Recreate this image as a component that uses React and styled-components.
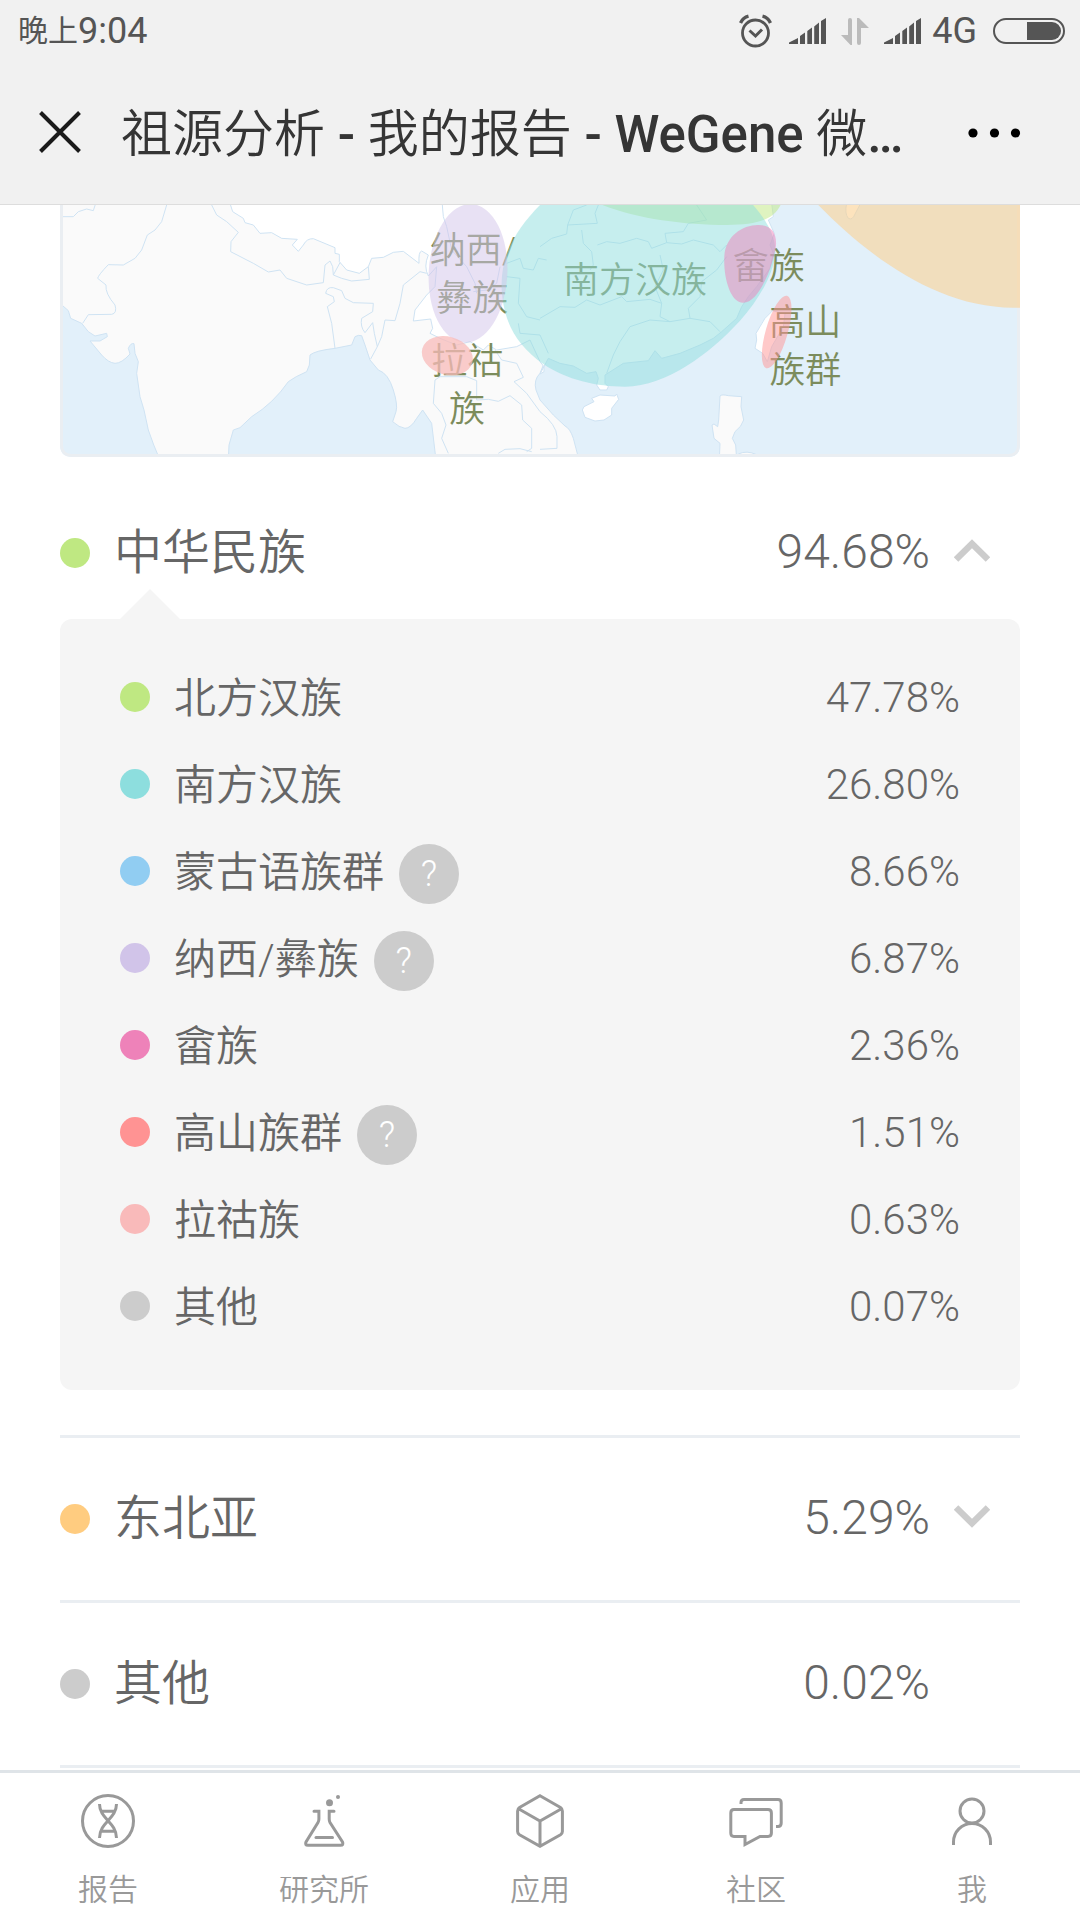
import React, { useState } from "react";
import styled, { createGlobalStyle } from "styled-components";

const GlobalStyle = createGlobalStyle`
  *, *::before, *::after { box-sizing: border-box; }
  body {
    margin: 0;
    background: #ffffff;
    color: #666666;
    font-family: Roboto, "Noto Sans CJK SC", sans-serif;
    font-weight: 300;
  }
  button { font: inherit; color: inherit; background: none; border: 0; padding: 0; cursor: pointer; }
  svg { display: block; }
`;

const Page = styled.div`
  display: flex;
  flex-direction: column;
  min-height: 100vh;
`;

const TopBar = styled.header`
  background: #f1f1f1;
  border-bottom: 1px solid #dddddd;
`;

const StatusBar = styled.div`
  display: flex;
  align-items: center;
  justify-content: space-between;
  height: 60px;
  padding: 2px 15px 0 18px;
  color: #555555;
  font-size: 36px;
  line-height: 56px;
  font-weight: 400;
`;

const Clock = styled.div`
  display: flex;
  align-items: center;
`;

const DayPart = styled.span`
  font-size: 30px;
`;

const StatusIcons = styled.div`
  display: flex;
  align-items: center;
  gap: 15px;
`;

const AlarmSvg = styled.svg`
  margin-right: 2px;
`;

const Network = styled.span`
  margin: 0 1px 0 -4px;
`;

const TitleBar = styled.div`
  display: flex;
  align-items: center;
  height: 144px;
  padding: 0 58px 0 39px;
`;

const IconButton = styled.button`
  flex: none;
`;

const Title = styled.h1`
  flex: 1;
  min-width: 0;
  margin: 0 24px 0 40px;
  padding-top: 6px;
  overflow: hidden;
  white-space: nowrap;
  color: #353535;
  font-size: 51px;
  line-height: 72px;
  font-weight: 350;
`;

const Latin = styled.span`
  font-weight: 500;
`;

const Content = styled.main`
  flex: 1;
  padding: 0 60px 2px;
`;

const MapSvg = styled.svg`
  width: 100%;
  height: auto;
`;

const MapLabel = styled.text`
  font-size: 108px;
  font-weight: 350;
  fill: #7c8c5c;
`;

const Group = styled.section`
  border-bottom: 3px solid #eaeef2;
  padding-top: ${(p) => (p.$open ? 30 : 0)}px;
  padding-bottom: ${(p) => (p.$open ? 45 : 0)}px;
`;

const Summary = styled.button`
  display: flex;
  align-items: center;
  width: 100%;
  height: ${(p) => (p.$open ? 132 : 162)}px;
  padding-right: 30px;
  padding-bottom: 4px;
  font-size: 48px;
  line-height: 72px;
  text-align: left;
`;

const Dot = styled.span`
  flex: none;
  width: 30px;
  height: 30px;
  border-radius: 50%;
  background: ${(p) => p.$color};
  margin-right: 24px;
`;

const SummaryDot = styled(Dot)`
  margin-top: 4px;
`;

const Name = styled.span`
  padding-top: 4px;
  font-weight: 350;
  white-space: nowrap;
`;

const Percent = styled.span`
  margin-left: auto;
  padding-top: 2px;
`;

const ChevronSlot = styled.span`
  width: 36px;
  margin-left: 24px;
`;

const Panel = styled.ul`
  position: relative;
  list-style: none;
  margin: 0;
  padding: 34px 60px 41px;
  border-radius: 12px;
  background: #f5f5f5;

  &::before {
    content: "";
    position: absolute;
    left: 60px;
    bottom: 100%;
    border: 30px solid transparent;
    border-top-width: 0;
    border-bottom-color: #f5f5f5;
  }
`;

const Item = styled.li`
  display: flex;
  align-items: center;
  height: 87px;
  font-size: 42px;
  line-height: 60px;
`;

const Help = styled.button`
  flex: none;
  width: 60px;
  height: 60px;
  margin: 6px 0 0 15px;
  border-radius: 50%;
  background: #cccccc;
  color: #ffffff;
  font-size: 36px;
  line-height: 60px;
`;

const TabBar = styled.nav`
  display: flex;
  height: 150px;
  border-top: 3px solid #dfe4e8;
  background: #ffffff;
`;

const Tab = styled.a`
  flex: 1;
  display: flex;
  flex-direction: column;
  align-items: center;
  gap: 24px;
  padding-top: 21px;
  color: #999999;
  font-size: 30px;
  line-height: 36px;
  font-weight: 350;
  text-decoration: none;
`;

const AlarmIcon = () => (
  <AlarmSvg width="33" height="34" viewBox="0 0 33 34" fill="none" stroke="#555" aria-hidden="true">
    <circle cx="16.5" cy="19" r="13" strokeWidth="2.8" />
    <path d="M10.5 16.5L16.5 22L23 15.5" strokeWidth="3" />
    <path d="M1.5 9Q4 3.5 9.5 2.2M31.500 9Q29 3.500 23.500 2.200" strokeWidth="3.4" />
  </AlarmSvg>
);

const SignalIcon = () => (
  <svg width="37" height="26" viewBox="0 0 37 26" fill="#555" aria-hidden="true">
    <path d="M0 26V24.500L9 20V26ZM11 26V18L16 14.500V26ZM18.300 26V13L23 9.500V26ZM25.200 26V8.500L30 4.500V26ZM32 26V3L37 0V26Z" />
  </svg>
);

const DataIcon = () => (
  <svg width="28" height="27" viewBox="0 0 28 27" fill="#bbb" aria-hidden="true">
    <path d="M7 2Q7 0 9 0T11 2V27H9.500L0 17H7ZM16 0H18L28 10H20V25Q20 27 18 27T16 25Z" />
  </svg>
);

const BatteryIcon = () => (
  <svg width="72" height="26" viewBox="0 0 72 26" aria-hidden="true">
    <rect x="1" y="1" width="70" height="24" rx="12" fill="none" stroke="#555" strokeWidth="2" />
    <path d="M34 4H59A9 9 0 0 1 59 22H34Z" fill="#555" />
  </svg>
);

const Chevron = ({ up }) => (
  <svg width="36" height="24" viewBox="0 0 36 24" fill="none" stroke="#ccc" strokeWidth="6.5" aria-hidden="true">
    <path d={up ? "M2 20.500L18 4.800L34 20.500" : "M2 2.500L18 18.200L34 2.500"} />
  </svg>
);

const tabIcons = {
  report: (
    <>
      <circle cx="27" cy="27" r="25.500" />
      <path d="M18.500 10C18.500 25 35.500 28 35.500 44M35.500 10C35.500 25 18.500 28 18.500 44M20 17.300H34M20 37.300H34" />
    </>
  ),
  lab: (
    <>
      <path d="M17 17.300H21.900V25Q21.900 27 21 28.500L9 48Q7.500 51.200 11 51.200H43.500Q47 51.200 45.500 48L33 28.500Q32.200 27 32.200 25V17.300H37" strokeLinecap="round" />
      <path d="M19 43.500H35.500" strokeLinecap="round" />
      <circle cx="32.500" cy="8.700" r="3.500" fill="#999" stroke="none" />
      <circle cx="41" cy="3" r="2" fill="#999" stroke="none" />
    </>
  ),
  apps: (
    <path d="M27 1.800L47.500 13.500Q49.400 14.700 49.400 17V37.500Q49.400 39.500 47.500 40.700L27 52.300L6.500 40.700Q4.600 39.500 4.600 37.500V17Q4.600 14.700 6.500 13.500ZM5.500 14.700L27 27L48.500 14.700M27 27V52" />
  ),
  community: (
    <>
      <path d="M5 15.500H39Q42.400 15.500 42.400 19V39Q42.400 42.400 39 42.400H31L16 50.500V42.400H5Q1.800 42.400 1.800 39V19Q1.800 15.500 5 15.500Z" />
      <path d="M12 10V8.500Q12 5.500 15 5.500H49Q52.200 5.500 52.200 9V29Q52.200 32.500 49 32.500H47" />
    </>
  ),
  me: (
    <>
      <circle cx="27" cy="17" r="12" />
      <path d="M8.500 51V48A18.500 18.500 0 0 1 45.500 48V51" />
    </>
  ),
};

const tabs = [
  ["report", "报告"],
  ["lab", "研究所"],
  ["apps", "应用"],
  ["community", "社区"],
  ["me", "我"],
];

const groups = [
  {
    name: "中华民族",
    value: "94.68%",
    color: "#bfe882",
    items: [
      { name: "北方汉族", value: "47.78%", color: "#bfe882" },
      { name: "南方汉族", value: "26.80%", color: "#8ddede" },
      { name: "蒙古语族群", value: "8.66%", color: "#91cdf2", help: true },
      { name: "纳西/彝族", value: "6.87%", color: "#d1c4e9", help: true },
      { name: "畲族", value: "2.36%", color: "#ee82b9" },
      { name: "高山族群", value: "1.51%", color: "#ff9393", help: true },
      { name: "拉祜族", value: "0.63%", color: "#f9baba" },
      { name: "其他", value: "0.07%", color: "#cccccc" },
    ],
  },
  { name: "东北亚", value: "5.29%", color: "#ffcc80", items: [] },
  { name: "其他", value: "0.02%", color: "#cccccc" },
];

const AncestryMap = () => (
  <MapSvg viewBox="60 45 2880 756" role="img" aria-label="祖源分布">
    <defs>
      <clipPath id="frame">
        <path d="M60 45H2940V765Q2940 801 2904 801H96Q60 801 60 765Z" />
      </clipPath>
    </defs>
    <g clipPath="url(#frame)">
      <rect x="60" y="45" width="2880" height="756" fill="#e2f0fa" />
      <g stroke="#cfe3f3" strokeWidth="3" strokeLinejoin="round">
        <path
          fill="#fafafa"
          d="M60 340L85 362L92 385L125 400L145 425L165 438L200 430L202 440L180 453L150 453L185 495Q205 518 225 520Q245 520 270 492L265 475Q272 458 282 461L285 490L295 515L290 550L300 620L312 660L325 720Q340 765 360 810H565L567 765L580 720L600 713L635 680Q700 640 745 575Q765 560 800 545L808 525L810 495Q825 482 885 475L935 465L945 440Q955 434 965 437L975 465L990 510L1015 540Q1045 550 1060 600Q1074 645 1068 665L1058 695Q1078 713 1095 715Q1112 715 1130 685L1148 660L1175 700L1188 810H1617L1600 745Q1590 715 1575 708L1540 675L1500 630L1488 600Q1480 570 1500 550L1520 500L1700 300L1500 30H60Z"
        />
        <path
          fill="#fff"
          d="M570 40L578 65L610 85L615 98L640 105L660 130L695 128L725 145L772 148L757 165L775 184L790 165Q800 145 820 146L885 173V190L898 193V215L920 240L958 250L985 230L995 205L1030 202L1060 187L1090 184L1137 220Q1135 185 1145 183L1165 195Q1150 230 1165 258L1190 230L1185 290L1160 315L1125 360L1120 393L1172 387L1178 415L1170 430L1200 445L1250 465L1290 455L1330 480L1345 465L1370 480L1430 470L1470 450L1500 515L1512 530V545L1500 552L1525 505L1560 520L1600 528L1640 550L1668 545L1675 565L1670 585L1680 600H1700L1705 590L1695 580V555L1750 520L1825 512L1845 482L1865 505L1920 490L1980 465L2020 445L2045 425L2090 385L2105 350L2125 320L2150 290L2190 235L2200 190L2190 165L2203 130L2185 90L2200 80L2195 40Z"
        />
        <path
          fill="none"
          d="M60 80H100L115 65L140 57L160 62L167 40M380 45L365 95L345 120L322 135L305 180L285 205L250 225L205 224Q175 255 173 265L198 285Q195 310 225 345Q232 370 215 373L145 374L128 400M515 45L530 75L560 95L595 127L573 155L572 185L640 220L685 246L720 240L740 265L800 285L850 278L855 225L870 213L878 230L880 255L905 265L935 273L988 268L985 230M880 255L900 218M885 475L875 400L862 350L883 335L880 320L857 310Q860 290 880 293L905 302L915 325L940 338L1000 340L998 365L965 385Q960 410 975 428L998 398L1003 430L1012 470L992 507M1012 470L1025 440L1035 390L1065 392L1080 340L1090 285L1140 245L1160 250M1200 560L1185 570L1180 640L1205 670L1218 705L1205 745L1225 790M1200 560L1280 560L1310 572V630L1345 628L1375 634L1410 617L1445 645L1448 690L1475 715V775L1460 785M1375 790L1395 778L1440 776L1475 785M1365 480L1385 510L1430 520L1450 562L1422 575L1460 610L1500 665Q1550 705 1551 740V775L1500 778M1207 45L1210 80L1220 110L1235 180L1280 230L1305 280L1310 310"
        />
        <path
          fill="none"
          d="M1500 170L1535 145L1580 132L1583 105L1672 100L1665 70L1675 45M1583 105L1600 60L1640 45M1625 120L1630 160L1655 185L1660 225L1650 240M1672 165L1700 155L1740 160L1790 145L1825 155L1835 175L1880 158L1925 162L1960 150L2020 165L2040 185L2060 165M1880 158L1875 130L1930 125L1945 100L2000 90L1980 60L1970 45M1500 385L1560 350L1605 352L1640 330L1680 345L1745 320L1760 335L1830 328L1865 340L1860 380L1890 395L1830 390L1770 410L1740 455L1720 495L1700 550M1865 340L1845 290L1870 240L1860 195M1890 395L1950 385L1945 355L1980 320L1985 275L2030 240L2060 200M1950 385L2010 395L2040 425M1400 220L1440 205L1450 235L1480 240L1495 205L1520 210M1400 260L1440 265L1435 340L1460 380L1500 390M1435 400L1440 430L1500 435L1525 490M1380 230L1370 280L1340 300L1300 305"
        />
        <path fill="#fff" d="M1655 625L1680 615L1725 618L1730 612L1736 628L1715 655V675L1692 690L1665 693L1635 682L1627 660L1632 650L1662 635Z" />
        <path fill="#fff" d="M2198 362Q2170 385 2160 410L2148 430L2150 450L2145 475L2168 490L2182 515L2195 470L2230 410L2235 372Z" />
        <path fill="#fafafa" d="M2040 618Q2045 612 2065 617L2105 620L2103 650L2111 690Q2105 710 2085 725L2077 745L2087 765L2090 810H2038L2040 760L2022 745L2016 705L2022 702L2033 710L2036 690ZM2095 792Q2120 780 2150 794L2130 810H2100Z" />
        <path fill="#fafafa" d="M2420 40Q2413 70 2425 85Q2437 92 2445 72L2462 40Z" />
      </g>
      <path d="M64.500 40V765Q64.500 796.500 96 796.500H2904Q2935.500 796.500 2935.500 765V40" fill="none" stroke="#eaeef2" strokeWidth="9" />
      <MapLabel x="1169" y="220">纳西/</MapLabel>
      <MapLabel x="1189" y="364">彝族</MapLabel>
      <MapLabel x="1174" y="552">拉祜</MapLabel>
      <MapLabel x="1227" y="696">族</MapLabel>
      <MapLabel x="1569" y="310">南方汉族</MapLabel>
      <MapLabel x="2078" y="266">畲族</MapLabel>
      <MapLabel x="2188" y="436">高山</MapLabel>
      <MapLabel x="2188" y="580">族群</MapLabel>
      <g fillOpacity="0.5">
        <path fill="#bfe882" d="M1675 40C1780 85 1930 105 2060 105C2160 105 2205 85 2224 40Z" />
        <path fill="#8ddede" d="M1505 40C1425 120 1380 200 1385 300C1392 400 1430 465 1510 522C1580 570 1670 590 1755 590C1880 588 2010 490 2100 392C2160 325 2205 245 2206 180C2204 130 2175 85 2135 40Z" />
        <ellipse fill="#d1c4e9" cx="1284" cy="250" rx="118" ry="208" transform="rotate(3 1284 250)" />
        <path fill="#ee82b9" d="M2155 105C2195 105 2210 130 2208 165C2203 215 2160 338 2110 338C2070 338 2050 260 2053 200C2056 140 2105 105 2155 105Z" />
        <ellipse fill="#ff9393" cx="2210" cy="426" rx="33" ry="113" transform="rotate(16 2210 426)" />
        <path fill="#ffcc80" d="M2330 40C2480 195 2690 353 2920 353H2945V40Z" />
      </g>
      <ellipse fill="#f8bbba" fillOpacity="0.75" cx="1222" cy="497" rx="78" ry="57" transform="rotate(16 1222 497)" />
    </g>
  </MapSvg>
);

const AncestryGroup = ({ group, initiallyOpen }) => {
  const [open, setOpen] = useState(initiallyOpen);
  const expanded = open && !!group.items && group.items.length > 0;
  return (
    <Group $open={expanded}>
      <Summary
        type="button"
        $open={expanded}
        aria-expanded={group.items ? expanded : undefined}
        onClick={() => setOpen(!open)}
      >
        <SummaryDot $color={group.color} />
        <Name>{group.name}</Name>
        <Percent>{group.value}</Percent>
        <ChevronSlot>{group.items && <Chevron up={expanded} />}</ChevronSlot>
      </Summary>
      {expanded && (
        <Panel>
          {group.items.map((item) => (
            <Item key={item.name}>
              <Dot $color={item.color} />
              <Name>{item.name}</Name>
              {item.help && <Help type="button">?</Help>}
              <Percent>{item.value}</Percent>
            </Item>
          ))}
        </Panel>
      )}
    </Group>
  );
};

export default function App() {
  return (
    <Page>
      <GlobalStyle />
      <TopBar>
        <StatusBar>
          <Clock>
            <DayPart>晚上</DayPart>
            <span>9:04</span>
          </Clock>
          <StatusIcons>
            <AlarmIcon />
            <SignalIcon />
            <DataIcon />
            <SignalIcon />
            <Network>4G</Network>
            <BatteryIcon />
          </StatusIcons>
        </StatusBar>
        <TitleBar>
          <IconButton type="button" aria-label="关闭">
            <svg width="42" height="42" viewBox="0 0 42 42" stroke="#1a1a1a" strokeWidth="4">
              <path d="M1.500 1.500L40.500 40.500M40.500 1.500L1.500 40.500" />
            </svg>
          </IconButton>
          <Title>
            祖源分析<Latin> - </Latin>我的报告<Latin> - WeGene </Latin>微<Latin>…</Latin>
          </Title>
          <IconButton type="button" aria-label="更多">
            <svg width="54" height="42" viewBox="0 0 54 42">
              <circle cx="5" cy="22" r="4.600" />
              <circle cx="26.500" cy="22" r="4.600" />
              <circle cx="47.500" cy="22" r="4.600" />
            </svg>
          </IconButton>
        </TitleBar>
      </TopBar>
      <Content>
        <AncestryMap />
        {groups.map((group, i) => (
          <AncestryGroup key={group.name} group={group} initiallyOpen={i === 0} />
        ))}
      </Content>
      <TabBar>
        {tabs.map(([id, label]) => (
          <Tab key={id} href={`#${id}`}>
            <svg width="54" height="54" viewBox="0 0 54 54" fill="none" stroke="#999" strokeWidth="3" aria-hidden="true">
              {tabIcons[id]}
            </svg>
            {label}
          </Tab>
        ))}
      </TabBar>
    </Page>
  );
}
